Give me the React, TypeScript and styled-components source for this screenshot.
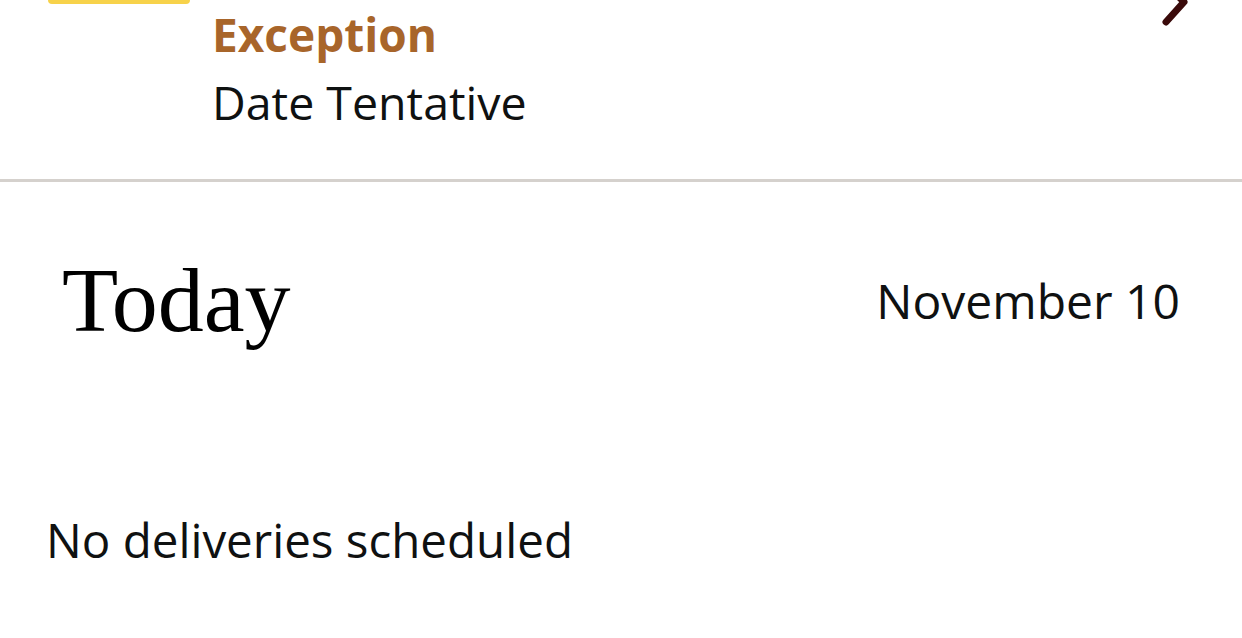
import React from "react";
import styled, { createGlobalStyle } from "styled-components";

const GlobalStyle = createGlobalStyle`
  html, body {
    margin: 0;
    padding: 0;
    background: #ffffff;
  }
  body {
    font-family: "Open Sans", "Noto Sans", sans-serif;
    color: #0f1111;
  }
`;

const Page = styled.div`
  width: 1242px;
  height: 638px;
  overflow: hidden;
  background: #ffffff;
`;

const StatusCard = styled.div`
  display: grid;
  grid-template-columns: 142px 1fr 40px;
  column-gap: 22px;
  padding: 0 52px 0 48px;
  height: 179px;
  border-bottom: 3px solid #d5d1cd;
`;

const Badge = styled.div`
  height: 4px;
  background: #f7d24a;
  border-radius: 0 0 6px 6px;
`;

const StatusText = styled.div`
  display: flex;
  flex-direction: column;
  padding-top: 2px;
`;

const StatusTitle = styled.div`
  font-size: 46px;
  font-weight: 700;
  color: #a8652a;
  line-height: 64px;
`;

const StatusDetail = styled.div`
  margin-top: 4px;
  font-size: 46.5px;
  color: #0f1111;
  line-height: 64px;
`;

const Chevron = styled.svg`
  display: block;
  width: 40px;
  height: 30px;
`;

const DaySection = styled.section`
  display: flex;
  flex-direction: column;
  padding: 0 62px 0 46px;
`;

const DayHeader = styled.div`
  display: flex;
  justify-content: space-between;
  align-items: center;
  height: 100px;
  padding: 68px 0 0 16px;
`;

const DayTitle = styled.h2`
  margin: 0;
  font-family: "Liberation Serif", "DejaVu Serif", serif;
  font-weight: 400;
  font-size: 92px;
  line-height: 100px;
  color: #000000;
`;

const DayDate = styled.div`
  font-size: 48px;
  color: #0f1111;
`;

const EmptyNote = styled.p`
  margin: 158px 0 0;
  font-size: 47.5px;
  line-height: 64px;
  color: #0f1111;
`;

export default function App() {
  return (
    <Page>
      <GlobalStyle />
      <StatusCard>
        <Badge />
        <StatusText>
          <StatusTitle>Exception</StatusTitle>
          <StatusDetail>Date Tentative</StatusDetail>
        </StatusText>
        <Chevron viewBox="0 0 40 30">
          <path
            d="M12 -20 L34 2 L16 22"
            fill="none"
            stroke="#3a0a0a"
            strokeWidth="7"
            strokeLinecap="round"
            strokeLinejoin="round"
          />
        </Chevron>
      </StatusCard>
      <DaySection>
        <DayHeader>
          <DayTitle>Today</DayTitle>
          <DayDate>November 10</DayDate>
        </DayHeader>
        <EmptyNote>No deliveries scheduled</EmptyNote>
      </DaySection>
    </Page>
  );
}
